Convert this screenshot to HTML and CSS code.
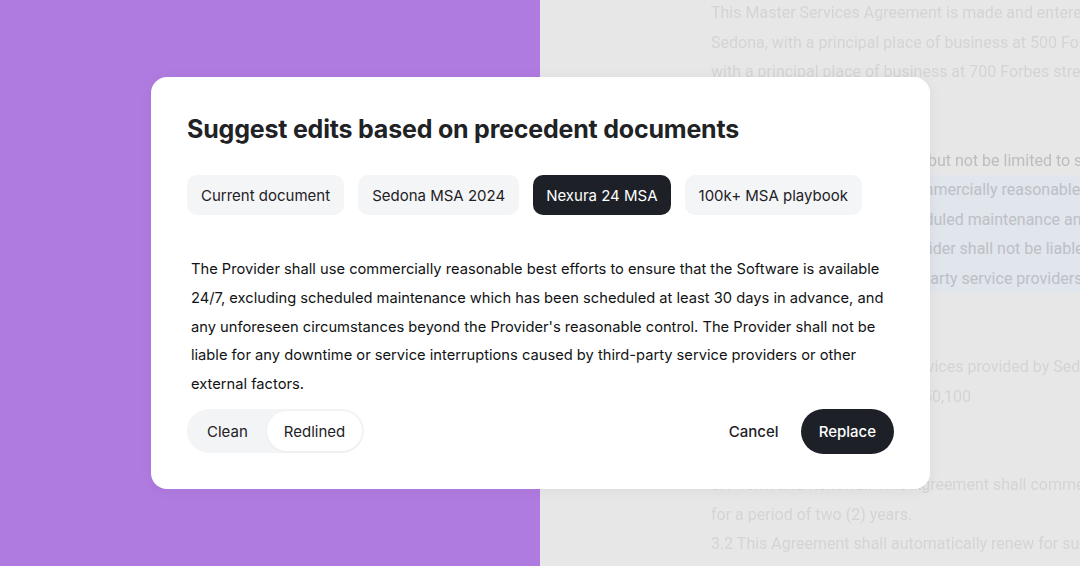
FILE: index.html
```html
<!DOCTYPE html>
<html lang="en">
<head>
<meta charset="utf-8">
<title>Suggest edits</title>
<link rel="stylesheet" href="styles.css">
</head>
<body>
<div class="stage">
  <div class="accent"></div>
  <div class="doc">
    <p class="ln">This Master Services Agreement is made and entered into as of the Effective Date</p>
    <p class="ln">Sedona, with a principal place of business at 500 Forbes Avenue, and Nexura,</p>
    <p class="ln">with a principal place of business at 700 Forbes street, Pittsburgh.</p>
    <p class="ln"></p>
    <p class="ln">1. Services</p>
    <p class="ln dark">1.1 The Services shall include, but not be limited to software development</p>
    <p class="ln hl">1.2. The Provider shall use commercially reasonable best efforts</p>
    <p class="ln hl">available 24/7, excluding scheduled maintenance and any</p>
    <p class="ln hl">'s reasonable control. The Provider shall not be liable for any</p>
    <p class="ln hl">interruptions, caused by third-party service providers or</p>
    <p class="ln"></p>
    <p class="ln"></p>
    <p class="ln">2.1 Fees. The total fees for services provided by Sedona</p>
    <p class="ln">The monthly fee shall be USD 50,100</p>
    <p class="ln"></p>
    <p class="ln"></p>
    <p class="ln">3.1 Term and Renewal. This Agreement shall commence on the Effective Date</p>
    <p class="ln">for a period of two (2) years.</p>
    <p class="ln">3.2 This Agreement shall automatically renew for successive terms</p>
  </div>

  <section class="dialog">
    <h1 class="title">Suggest edits based on precedent documents</h1>
    <div class="tabs">
      <button class="tab">Current document</button>
      <button class="tab">Sedona MSA 2024</button>
      <button class="tab active">Nexura 24 MSA</button>
      <button class="tab">100k+ MSA playbook</button>
    </div>
    <p class="clause">The Provider shall use commercially reasonable best efforts to ensure that the Software is available 24/7, excluding scheduled maintenance which has been scheduled at least 30 days in advance, and any unforeseen circumstances beyond the Provider's reasonable control. The Provider shall not be liable for any downtime or service interruptions caused by third-party service providers or other external factors.</p>
    <div class="footer">
      <div class="toggle">
        <span class="opt">Clean</span>
        <span class="opt on">Redlined</span>
      </div>
      <div class="actions">
        <button class="cancel">Cancel</button>
        <button class="replace">Replace</button>
      </div>
    </div>
  </section>
</div>
</body>
</html>
```

FILE: styles.css
```css
* { box-sizing: border-box; }
html, body { margin: 0; padding: 0; }
body {
  width: 1080px;
  height: 566px;
  overflow: hidden;
  font-family: "Inter", "Noto Sans", sans-serif;
  color: #1e2125;
}
.stage {
  position: relative;
  display: flex;
  width: 1080px;
  height: 566px;
}
.accent {
  width: 540px;
  background: #b07be0;
}
.doc {
  width: 540px;
  background: #e7e7e7;
  padding-left: 171px;
  margin-top: -2px;
  overflow: hidden;
  font-family: "Roboto", "Liberation Sans", sans-serif;
  font-size: 16px;
}
.ln {
  margin: 0;
  height: 29.5px;
  line-height: 29.5px;
  white-space: nowrap;
  color: #d4d4d4;
  filter: blur(0.4px);
}
.ln.dark { color: #bdbdbd; }
.ln.hl {
  color: #bcc0c7;
  background: #e1e5ec;
  margin-left: -171px;
  padding-left: 171px;
  filter: none;
}
.dialog {
  position: absolute;
  left: 151px;
  top: 77px;
  width: 779px;
  height: 412px;
  background: #ffffff;
  border-radius: 16px;
  padding: 36px;
  box-shadow: 0 2px 14px rgba(60, 40, 90, 0.06);
  display: flex;
  flex-direction: column;
}
.title {
  margin: 0;
  font-size: 25px;
  line-height: 32px;
  font-weight: 700;
  letter-spacing: -0.2px;
  color: #202225;
}
.tabs {
  display: flex;
  gap: 14px;
  margin-top: 30px;
}
.tab {
  height: 40px;
  padding: 0 14px;
  border: none;
  border-radius: 10px;
  background: #f4f5f7;
  font-family: inherit;
  font-size: 15px;
  font-weight: 400;
  color: #1e2125;
}
.tab.active {
  padding: 0 13px;
  background: #1d2127;
  color: #ffffff;
}
.clause {
  margin: 40px 0 0 4px;
  width: 708px;
  font-size: 14.7px;
  line-height: 28.8px;
  color: #111315;
}
.footer {
  margin-top: 10px;
  display: flex;
  justify-content: space-between;
  align-items: center;
}
.toggle {
  display: flex;
  align-items: center;
  height: 44px;
  padding: 2px;
  background: #f3f4f5;
  border-radius: 22px;
}
.opt {
  display: flex;
  align-items: center;
  height: 40px;
  padding: 0 19px 0 18px;
  font-size: 15px;
  color: #1e2125;
  border-radius: 20px;
}
.opt.on {
  padding: 0 17px;
  background: #ffffff;
  box-shadow: 0 1px 3px rgba(0, 0, 0, 0.04);
}
.actions {
  display: flex;
  align-items: center;
  gap: 12px;
}
.cancel {
  border: none;
  background: transparent;
  font-family: inherit;
  font-size: 15px;
  font-weight: 500;
  color: #1e2125;
  padding: 0 10px;
  height: 44px;
}
.replace {
  border: none;
  background: #1d2127;
  color: #ffffff;
  font-family: inherit;
  font-size: 15px;
  font-weight: 500;
  height: 45px;
  padding: 0 18px;
  border-radius: 23px;
}
```
